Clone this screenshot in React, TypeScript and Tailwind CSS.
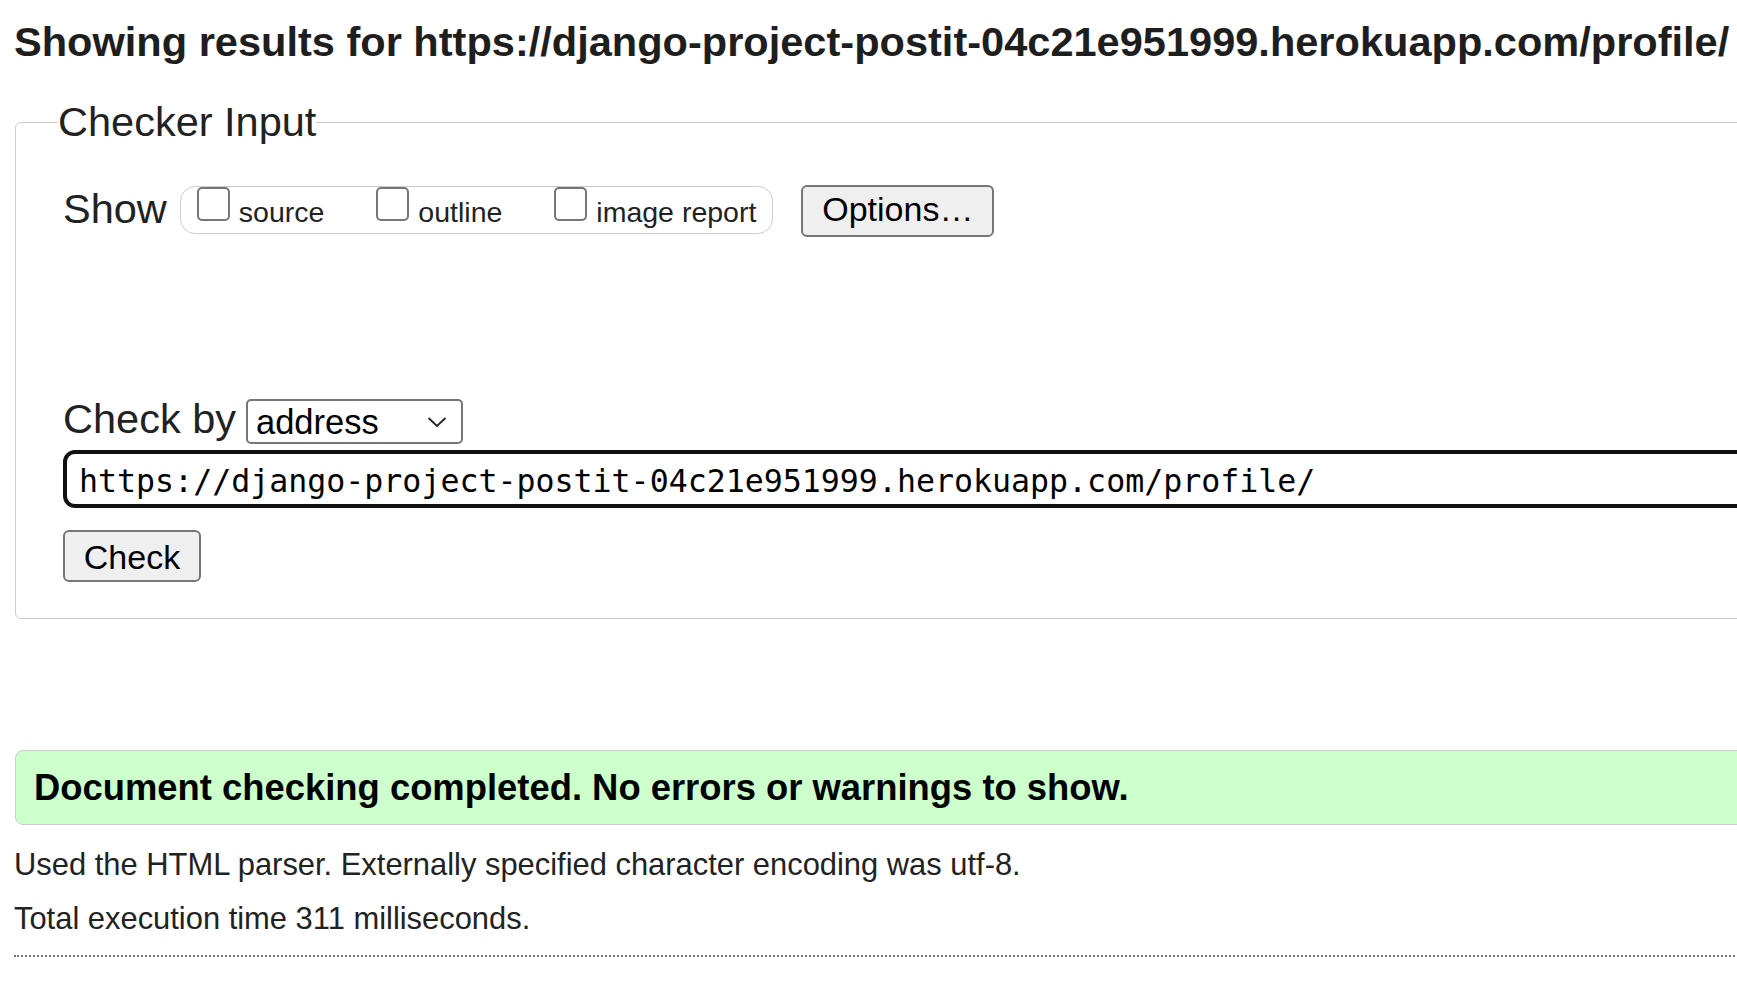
import React from 'react';

const url = 'https://django-project-postit-04c21e951999.herokuapp.com/profile/';

const CheckOption: React.FC<{ label: string }> = ({ label }) => (
    <label className="flex items-start">
        <input type="checkbox" className="appearance-none m-0 w-[33px] h-[34px] border-2 border-[#767676] rounded-[5px] bg-white" />
        <span className="ml-[9px] mt-[9px] text-[28.5px] leading-[33px]">{label}</span>
    </label>
);

const App: React.FC = () => {
    return (
        <div className="w-[1737px] h-[984px] overflow-hidden bg-white text-[#222] font-['Liberation_Sans',Arial,sans-serif]">
            <div className="w-[2000px] pl-[14px] pt-[18px]">
                <h2 className="text-[41.55px] leading-[48px] font-bold text-[#1e1e1e] whitespace-nowrap">
                    Showing results for {url}
                </h2>

                {/* Checker input */}
                <fieldset className="ml-[1px] mt-[32px] w-[1900px] border border-[#ccc] rounded-[6px] pl-[42px] pb-[36px]">
                    <legend className="text-[41.5px] leading-[48px]">Checker Input</legend>
                    <div className="pl-[5px] pt-[39px]">
                        <div className="flex items-start">
                            <span className="text-[41.5px] leading-[48px]">Show</span>
                            <div className="ml-[13px] mt-[1px] h-[48px] flex items-start gap-[52px] pl-[16px] pr-[16px] border border-[#ccc] rounded-[15px]">
                                <CheckOption label="source" />
                                <CheckOption label="outline" />
                                <CheckOption label="image report" />
                            </div>
                            <button className="ml-[28px] w-[193px] h-[52px] pb-[5px] bg-[#efefef] border-2 border-[#767676] rounded-[6px] text-[34px] leading-[40px] text-black">
                                Options…
                            </button>
                        </div>

                        <div className="mt-[158px] flex items-start">
                            <span className="text-[41.5px] leading-[48px]">Check by</span>
                            <div className="ml-[10px] mt-[4px] w-[217px] h-[45px] flex items-center justify-between pl-[8px] pr-[14px] border-2 border-[#767676] rounded-[5px] bg-white text-black">
                                <span className="text-[34.5px] leading-[40px]">address</span>
                                <svg width="20" height="12" viewBox="0 0 20 12" fill="none">
                                    <path d="M1.5 2 L10 10 L18.5 2" stroke="#222" strokeWidth="1.8" />
                                </svg>
                            </div>
                        </div>

                        <input
                            readOnly
                            value={url}
                            className="block mt-[6px] w-[1800px] h-[58px] border-[4px] border-[#111] rounded-[12px] pl-[12px] pt-[3px] bg-white text-black text-[31.6px] font-['DejaVu_Sans_Mono',monospace] outline-none"
                        />

                        <button className="block mt-[22px] w-[138px] h-[52px] bg-[#efefef] border-2 border-[#767676] rounded-[6px] text-[34px] text-black">
                            Check
                        </button>
                    </div>
                </fieldset>

                {/* Result */}
                <div className="ml-[1px] mt-[131px] w-[1900px] h-[75px] flex items-center pl-[18px] border border-[#ccc] rounded-[8px] bg-[#ccffcc]">
                    <span className="text-[36.4px] font-bold text-black leading-[42px]">
                        Document checking completed. No errors or warnings to show.
                    </span>
                </div>

                <p className="mt-[13px] text-[30.9px] leading-[54px]">
                    Used the HTML parser. Externally specified character encoding was utf-8.
                </p>
                <p className="text-[30.9px] leading-[54px]">Total execution time 311 milliseconds.</p>

                <div className="mt-[9px] w-[1900px] border-t-2 border-dotted border-[#6f6f6f]" />
            </div>
        </div>
    );
};

export default App;
